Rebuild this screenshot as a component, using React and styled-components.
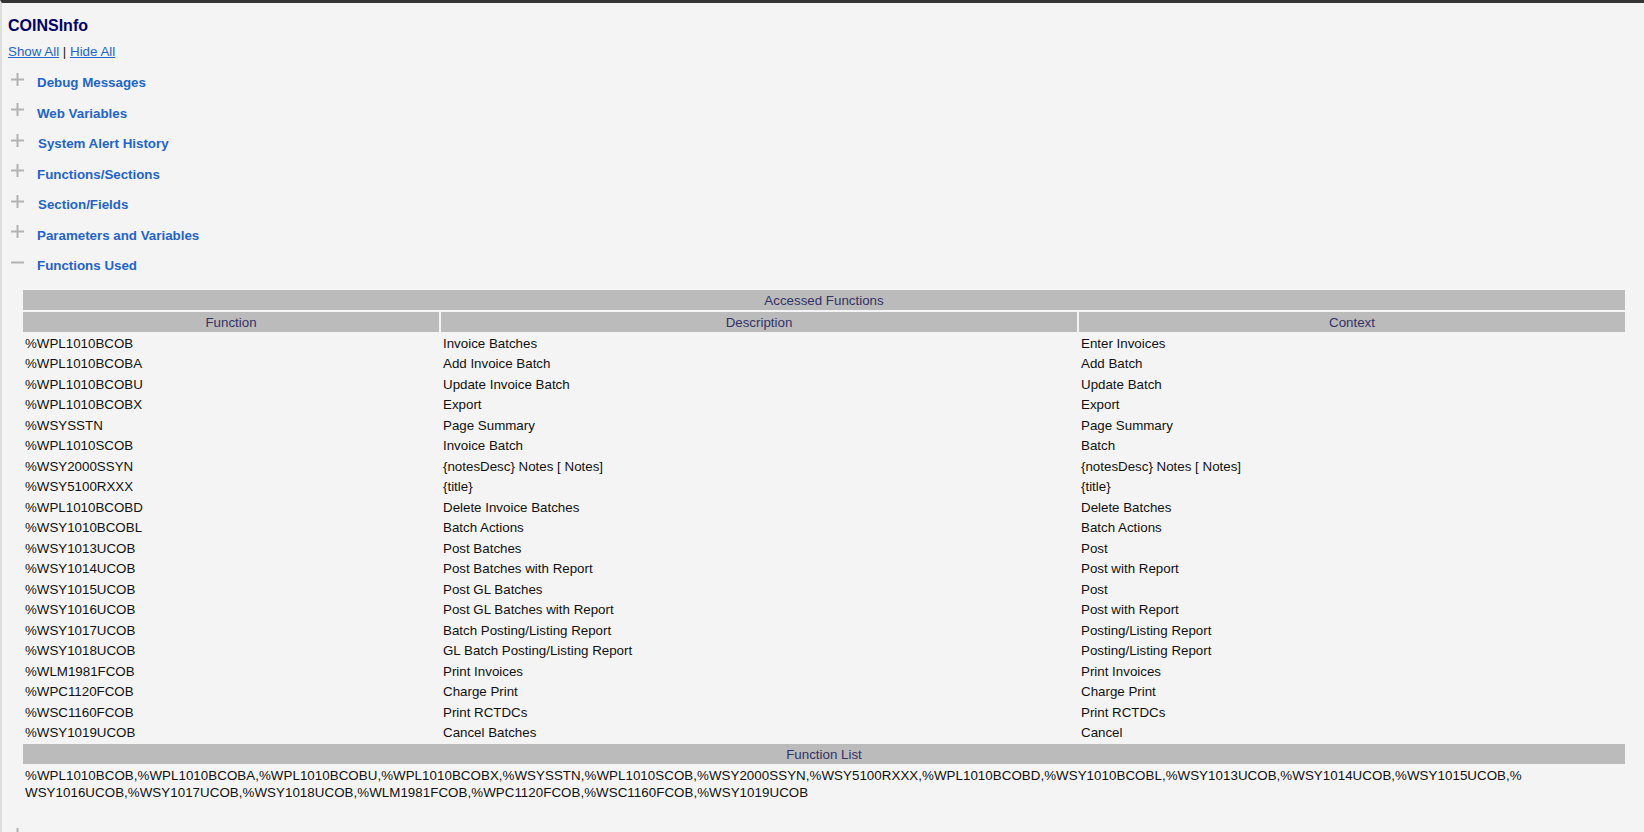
import React from 'react'
import styled, { createGlobalStyle } from 'styled-components'

const GlobalStyle = createGlobalStyle`
html, body {
    margin: 0;
    padding: 0;
    overflow: hidden;
    background: #f4f4f4;
}
`

const sections = [
    { title: 'Debug Messages' },
    { title: 'Web Variables' },
    { title: 'System Alert History', shift: 1 },
    { title: 'Functions/Sections' },
    { title: 'Section/Fields', shift: 1 },
    { title: 'Parameters and Variables' },
]

const functions = [
    ['%WPL1010BCOB', 'Invoice Batches', 'Enter Invoices'],
    ['%WPL1010BCOBA', 'Add Invoice Batch', 'Add Batch'],
    ['%WPL1010BCOBU', 'Update Invoice Batch', 'Update Batch'],
    ['%WPL1010BCOBX', 'Export', 'Export'],
    ['%WSYSSTN', 'Page Summary', 'Page Summary'],
    ['%WPL1010SCOB', 'Invoice Batch', 'Batch'],
    ['%WSY2000SSYN', '{notesDesc} Notes [ Notes]', '{notesDesc} Notes [ Notes]'],
    ['%WSY5100RXXX', '{title}', '{title}'],
    ['%WPL1010BCOBD', 'Delete Invoice Batches', 'Delete Batches'],
    ['%WSY1010BCOBL', 'Batch Actions', 'Batch Actions'],
    ['%WSY1013UCOB', 'Post Batches', 'Post'],
    ['%WSY1014UCOB', 'Post Batches with Report', 'Post with Report'],
    ['%WSY1015UCOB', 'Post GL Batches', 'Post'],
    ['%WSY1016UCOB', 'Post GL Batches with Report', 'Post with Report'],
    ['%WSY1017UCOB', 'Batch Posting/Listing Report', 'Posting/Listing Report'],
    ['%WSY1018UCOB', 'GL Batch Posting/Listing Report', 'Posting/Listing Report'],
    ['%WLM1981FCOB', 'Print Invoices', 'Print Invoices'],
    ['%WPC1120FCOB', 'Charge Print', 'Charge Print'],
    ['%WSC1160FCOB', 'Print RCTDCs', 'Print RCTDCs'],
    ['%WSY1019UCOB', 'Cancel Batches', 'Cancel'],
]

// the list wraps after the "%" of %WSY1016UCOB
const fullList = functions.map(f => f[0]).join(',')
const splitAt = fullList.indexOf('WSY1016UCOB')
const listLines = [fullList.slice(0, splitAt), fullList.slice(splitAt)]

const Toggle = ({ open }) => (
    <Icon width="13" height="13" viewBox="0 0 13 13">
        <line x1="0" y1="6.5" x2="13" y2="6.5" stroke="#b3b3b3" strokeWidth="2" />
        {!open && <line x1="6.5" y1="0" x2="6.5" y2="13" stroke="#b3b3b3" strokeWidth="2" />}
    </Icon>
)

const App = () => {
    return (
        <Page>
            <GlobalStyle />
            <Title>COINSInfo</Title>
            <Links>
                <Link href="#">Show All</Link> | <Link href="#">Hide All</Link>
            </Links>
            <Sections>
                {sections.map(s => (
                    <Heading key={s.title}>
                        <Toggle />
                        <HeadingText $shift={s.shift}>{s.title}</HeadingText>
                    </Heading>
                ))}
                <Heading>
                    <Toggle open />
                    <HeadingText>Functions Used</HeadingText>
                </Heading>
                <Table>
                    <colgroup>
                        <col style={{ width: '416px' }} />
                        <col style={{ width: '636px' }} />
                        <col />
                    </colgroup>
                    <thead>
                        <tr>
                            <Th colSpan={3}>Accessed Functions</Th>
                        </tr>
                        <tr>
                            <Th>Function</Th>
                            <Th>Description</Th>
                            <Th>Context</Th>
                        </tr>
                    </thead>
                    <tbody>
                        {functions.map(([fn, desc, ctx]) => (
                            <tr key={fn}>
                                <Td>{fn}</Td>
                                <Td>{desc}</Td>
                                <Td>{ctx}</Td>
                            </tr>
                        ))}
                        <tr>
                            <Th colSpan={3}>Function List</Th>
                        </tr>
                        <tr>
                            <ListCell colSpan={3}>
                                {listLines.map(l => (
                                    <ListLine key={l}>{l}</ListLine>
                                ))}
                            </ListCell>
                        </tr>
                    </tbody>
                </Table>
                {/* next collapsed section, only its toggle reaches into view */}
                <Heading $gap={20}>
                    <Toggle />
                </Heading>
            </Sections>
        </Page>
    )
}

export default App

const Page = styled.div`
box-sizing: border-box;
min-height: 100vh;
border-top: 3px solid #353535;
border-left: 2px solid #dedede;
background: #f4f4f4;
padding: 0 0 0 6px;
font-family: "Liberation Sans", Arial, sans-serif;
font-size: 13.33px;
color: #111;
`
const Title = styled.div`
margin-top: 14px;
font-size: 16px;
font-weight: 700;
color: #000066;
line-height: 18.4px;
`
const Links = styled.div`
margin-top: 9px;
line-height: 15.3px;
color: #222;
`
const Link = styled.a`
color: #2266cc;
text-decoration: underline;
`
const Sections = styled.div`
margin-top: 8px;
`
const Heading = styled.div`
display: flex;
align-items: center;
height: 30.5px;
margin-top: ${p => p.$gap || 0}px;
`
const Icon = styled.svg`
flex: none;
margin: 0 0 7px 3px;
`
const HeadingText = styled.span`
margin-left: ${p => 13 + (p.$shift || 0)}px;
font-weight: 700;
color: #1f64cc;
line-height: 15.3px;
`
const Table = styled.table`
box-sizing: border-box;
width: calc(100% - 30px);
margin: 7px 17px 0 13px;
border-collapse: separate;
border-spacing: 2px;
table-layout: fixed;
font-size: 13.33px;
`
const Th = styled.th`
height: 20px;
padding: 0;
background: #bbbbbb;
color: #333366;
font-weight: 400;
text-align: center;
line-height: 15px;
`
const Td = styled.td`
height: 18.5px;
padding: 0 2px;
line-height: 15px;
text-align: left;
vertical-align: middle;
white-space: nowrap;
overflow: hidden;
`
const ListCell = styled.td`
padding: 1px 2px 0;
line-height: 17px;
`
const ListLine = styled.div`
white-space: nowrap;
overflow: hidden;
letter-spacing: 0.05px;
`
